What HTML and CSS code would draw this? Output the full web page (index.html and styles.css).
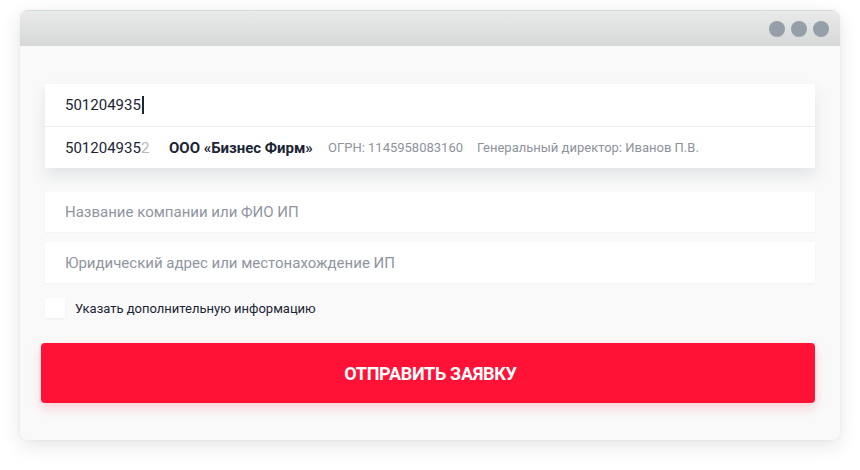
FILE: index.html
```html
<!DOCTYPE html>
<html lang="ru">
<head>
<meta charset="utf-8">
<link rel="stylesheet" href="styles.css">
</head>
<body>
<div class="window">
  <div class="titlebar">
    <span class="dot"></span><span class="dot"></span><span class="dot"></span>
  </div>
  <div class="content">
    <div class="suggest">
      <div class="field field-active">501204935<span class="caret"></span></div>
      <div class="option">
        <span class="inn">501204935<span class="rest">2</span></span>
        <span class="name">ООО «Бизнес Фирм»</span>
        <span class="meta">ОГРН: 1145958083160</span>
        <span class="meta">Генеральный директор: Иванов П.В.</span>
      </div>
    </div>
    <div class="field field-gap placeholder">Название компании или ФИО ИП</div>
    <div class="field field-small placeholder">Юридический адрес или местонахождение ИП</div>
    <label class="check"><span class="box"></span><span>Указать дополнительную информацию</span></label>
    <button class="submit">ОТПРАВИТЬ ЗАЯВКУ</button>
  </div>
</div>
</body>
</html>
```

FILE: styles.css
```css
* { box-sizing: border-box; }
html, body { margin: 0; padding: 0; background: #ffffff; }
body {
  font-family: Roboto, "Liberation Sans", sans-serif;
  width: 860px;
  height: 470px;
  padding: 10px 20px;
}
.window {
  width: 820px;
  height: 430px;
  background: #f9f9f9;
  border-radius: 8px;
  overflow: hidden;
  box-shadow: 0 6px 20px rgba(0, 0, 0, 0.10), 0 0 4px rgba(0, 0, 0, 0.04);
}
.titlebar {
  height: 36px;
  background: linear-gradient(#e9eae9, #d6d8d8);
  border-top: 1px solid #d2dde2;
  display: flex;
  justify-content: flex-end;
  align-items: center;
  gap: 6px;
  padding-right: 11px;
}
.dot {
  width: 16px;
  height: 16px;
  border-radius: 50%;
  background: #949fa9;
}
.content {
  padding: 38px 25px 0 25px;
  display: flex;
  flex-direction: column;
}
.suggest {
  background: #fff;
  box-shadow: 0 8px 14px rgba(40, 60, 90, 0.10);
}
.field {
  background: #fff;
  height: 41px;
  display: flex;
  align-items: center;
  padding-left: 20px;
  font-size: 15px;
  color: #1c2535;
}
.field-active {
  height: 43px;
  border-bottom: 1px solid #eceef1;
}
.caret {
  display: inline-block;
  width: 2px;
  height: 18px;
  background: #1c2535;
  margin-left: 1px;
}
.option {
  height: 41px;
  display: flex;
  align-items: center;
  padding-left: 20px;
  font-size: 13px;
  color: #8d939d;
}
.inn { font-size: 15px; color: #1c2535; width: 104px; }
.rest { color: #b5b9bf; }
.name { font-size: 15px; font-weight: 700; color: #1c2535; width: 159px; }
.meta { margin-right: 14px; font-size: 13px; }
.field-gap { margin-top: 24px; height: 40px; }
.field-small { margin-top: 10px; }
.placeholder { color: #8f959f; }
.field-gap, .field-small { box-shadow: 0 1px 2px rgba(0,0,0,0.03); }
.check {
  margin-top: 15px;
  display: flex;
  align-items: center;
  gap: 10px;
  font-size: 13px;
  color: #1b2436;
}
.box {
  width: 20px;
  height: 20px;
  background: #fff;
  box-shadow: 0 1px 2px rgba(0,0,0,0.05);
}
.submit {
  margin-top: 25px;
  margin-left: -4px;
  width: 774px;
  height: 60px;
  border: 0;
  border-radius: 4px;
  background: #ff1236;
  color: #fff;
  font-family: Roboto, "Liberation Sans", sans-serif;
  font-weight: 700;
  font-size: 18px;
  letter-spacing: -0.3px;
  padding-left: 11px;
  box-shadow: 0 5px 12px rgba(255, 18, 54, 0.18);
}
```
